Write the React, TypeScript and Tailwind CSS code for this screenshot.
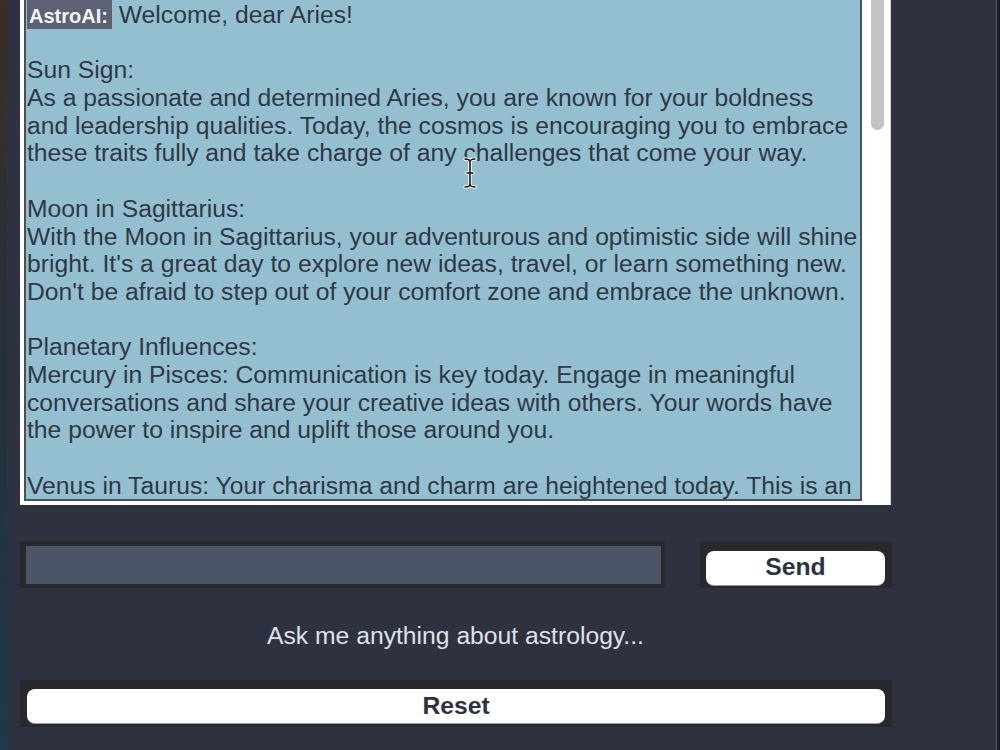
import React from 'react';

const lines: string[] = [
  '',
  'Sun Sign:',
  'As a passionate and determined Aries, you are known for your boldness',
  'and leadership qualities. Today, the cosmos is encouraging you to embrace',
  'these traits fully and take charge of any challenges that come your way.',
  '',
  'Moon in Sagittarius:',
  'With the Moon in Sagittarius, your adventurous and optimistic side will shine',
  "bright. It's a great day to explore new ideas, travel, or learn something new.",
  "Don't be afraid to step out of your comfort zone and embrace the unknown.",
  '',
  'Planetary Influences:',
  'Mercury in Pisces: Communication is key today. Engage in meaningful',
  'conversations and share your creative ideas with others. Your words have',
  'the power to inspire and uplift those around you.',
  '',
  'Venus in Taurus: Your charisma and charm are heightened today. This is an',
];

const App: React.FC = () => {
  return (
    <div className="w-[1000px] h-[750px] flex overflow-hidden bg-[#2e3240] font-['Liberation_Sans',Arial,sans-serif]">
      <div className="w-[7px] h-full bg-gradient-to-b from-[#3a2e26] via-[#23303a] to-[#1c3a4c]" />

      <div className="flex-1 flex flex-col pl-[13px] relative">
        {/* chat log */}
        <div className="w-[871px] h-[505px] bg-white flex border-r border-[#d6d6d6]">
          <div className="ml-[4px] w-[838px] h-[501px] bg-[#93bfd0] border-x-2 border-b-2 border-[#4a4f5c] overflow-hidden text-[24.7px] leading-[27.7px] text-[#303745] whitespace-pre pl-[1px] pt-[1px]">
            <div className="h-[27.7px] flex items-stretch">
              <span className="bg-[#5c6273] text-[#f4f5f7] font-bold text-[20px] leading-[20px] pl-[2px] pr-[4px] -mt-[1px] pt-[6px]">AstroAI:</span>
              <span> Welcome, dear Aries!</span>
            </div>
            {lines.map((l, i) => (
              <div key={i} className="h-[27.7px]">{l}</div>
            ))}
          </div>
          <div className="flex-1 flex justify-center pl-[2px]">
            <div className="w-[13px] h-[130px] rounded-b-full bg-[#c4c4c4]" />
          </div>
        </div>

        {/* input row */}
        <div className="mt-[36px] flex items-center">
          <div className="w-[645px] h-[47px] bg-[#29292d] p-[4px] pl-[6px] pt-[5px]">
            <div className="w-full h-[38px] bg-[#4b5467]" />
          </div>
          <div className="ml-[35px] w-[192px] h-[46px] bg-[#29292d] pl-[6px] pr-[7px] pt-[9px] pb-[2px]">
            <button className="w-full h-[35px] bg-white rounded-[8px] border-b border-[#9a9a9a] text-[24.7px] font-bold text-[#2e3240] leading-none">
              Send
            </button>
          </div>
        </div>

        <div className="w-[871px] mt-[34px] text-center text-[24.7px] text-[#dfe2e8] leading-[28px]">
          Ask me anything about astrology...
        </div>

        <div className="mt-[30px] w-[872px] h-[47px] bg-[#29292d] pl-[7px] pr-[7px] pt-[9px]">
          <button className="w-full h-[35px] bg-white rounded-[8px] border-b border-[#9a9a9a] text-[24.7px] font-bold text-[#2e3240] leading-none">
            Reset
          </button>
        </div>

        {/* mouse I-beam cursor */}
        <svg className="absolute left-[456px] top-[157px]" width="14" height="32" viewBox="0 0 14 32">
          <path d="M2 2c3 0 5 1 5 3v22c0 2-2 3-5 3M12 2c-3 0-5 1-5 3v22c0 2 2 3 5 3M4 16h6" fill="none" stroke="#fff" strokeWidth="3.5" strokeLinecap="round" />
          <path d="M2 2c3 0 5 1 5 3v22c0 2-2 3-5 3M12 2c-3 0-5 1-5 3v22c0 2 2 3 5 3M4 16h6" fill="none" stroke="#111" strokeWidth="1.5" strokeLinecap="round" />
        </svg>
      </div>

      <div className="w-[1px] h-full bg-[#5a5d66]" />
      <div className="w-[3px] h-full bg-[#1c1d22]" />
    </div>
  );
};

export default App;
